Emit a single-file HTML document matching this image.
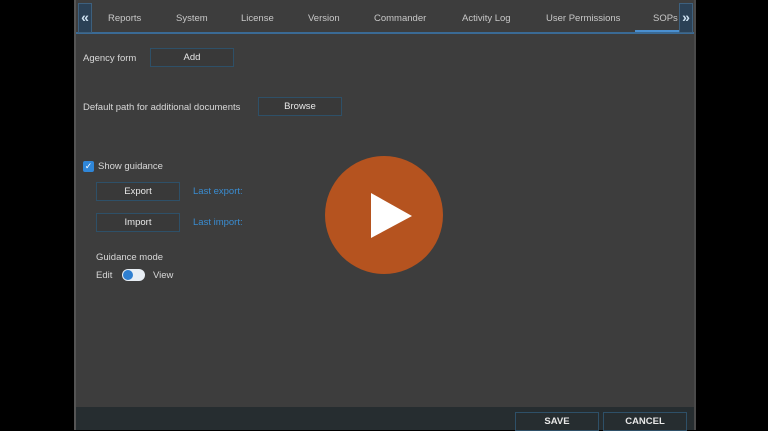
<!DOCTYPE html>
<html><head><meta charset="utf-8"><style>
*{margin:0;padding:0;box-sizing:border-box}
body{width:768px;height:430px;background:#000;position:relative;overflow:hidden;font-family:"Liberation Sans",sans-serif;font-size:9.5px;color:#d8d8d8}
.panel{position:absolute;left:74px;top:0;width:622px;height:430px;background:#3d3d3d;border-left:2px solid #555;border-right:2px solid #4a4a4a}
.abs{position:absolute}
.tabs{position:absolute;left:0;top:0;width:618px;height:34px;border-bottom:2px solid #3a6a95}
.tab{position:absolute;top:13px;color:#c8c8c8;font-size:9.5px}
.btn{position:absolute;height:19px;border:1.5px solid #2e5068;background:#393939;color:#e8e8e8;text-align:center;line-height:18px;font-size:9.5px}
.arrow{position:absolute;top:3px;width:14px;height:30px;background:#2b4156;border:1px solid #3d607e;color:#cfe2f2;font-size:14px;line-height:26px;text-align:center;font-weight:bold}
.link{position:absolute;color:#3a8cd0;font-size:9.5px}
.footer{position:absolute;left:0;top:407px;width:618px;height:23px;background:#262d30}
.fbtn{position:absolute;top:5px;height:19px;width:84px;border:1.5px solid #2e5068;color:#e8e8e8;text-align:center;line-height:17px;font-weight:bold;font-size:9.5px}
</style></head><body>
<div class="panel">
 <div class="tabs">
  <div class="arrow" style="left:2px">«</div>
  <div class="tab" style="left:32px">Reports</div>
  <div class="tab" style="left:100px">System</div>
  <div class="tab" style="left:165px">License</div>
  <div class="tab" style="left:232px">Version</div>
  <div class="tab" style="left:298px">Commander</div>
  <div class="tab" style="left:386px">Activity Log</div>
  <div class="tab" style="left:470px">User Permissions</div>
  <div class="tab" style="left:577px">SOPs</div>
  <div class="abs" style="left:559px;top:30px;width:44px;height:2px;background:#4a8fd0"></div>
  <div class="arrow" style="left:603px">»</div>
 </div>
 <div class="abs" style="left:7px;top:53px">Agency form</div>
 <div class="btn" style="left:74px;top:48px;width:84px">Add</div>
 <div class="abs" style="left:7px;top:102px">Default path for additional documents</div>
 <div class="btn" style="left:182px;top:97px;width:84px">Browse</div>
 <div class="abs" style="left:7px;top:161px;width:11px;height:11px;background:#2f86d8;border-radius:2px;color:#fff;font-size:9px;line-height:11px;text-align:center">✓</div>
 <div class="abs" style="left:22px;top:161px">Show guidance</div>
 <div class="btn" style="left:20px;top:182px;width:84px">Export</div>
 <div class="link" style="left:117px;top:186px">Last export:</div>
 <div class="btn" style="left:20px;top:213px;width:84px">Import</div>
 <div class="link" style="left:117px;top:217px">Last import:</div>
 <div class="abs" style="left:20px;top:252px">Guidance mode</div>
 <div class="abs" style="left:20px;top:270px">Edit</div>
 <div class="abs" style="left:46px;top:269px;width:23px;height:12px;border-radius:6px;background:#e8eef4"><div class="abs" style="left:1px;top:1px;width:10px;height:10px;border-radius:50%;background:#2f7fd0"></div></div>
 <div class="abs" style="left:77px;top:270px">View</div>
 <div class="footer">
  <div class="fbtn" style="left:439px">SAVE</div>
  <div class="fbtn" style="left:527px">CANCEL</div>
 </div>
</div>
<svg class="abs" style="left:0;top:0" width="768" height="430">
 <circle cx="384" cy="215" r="59" fill="#b5531f"/>
 <polygon points="371,193 412,216 371,238" fill="#fff"/>
</svg>
</body></html>
